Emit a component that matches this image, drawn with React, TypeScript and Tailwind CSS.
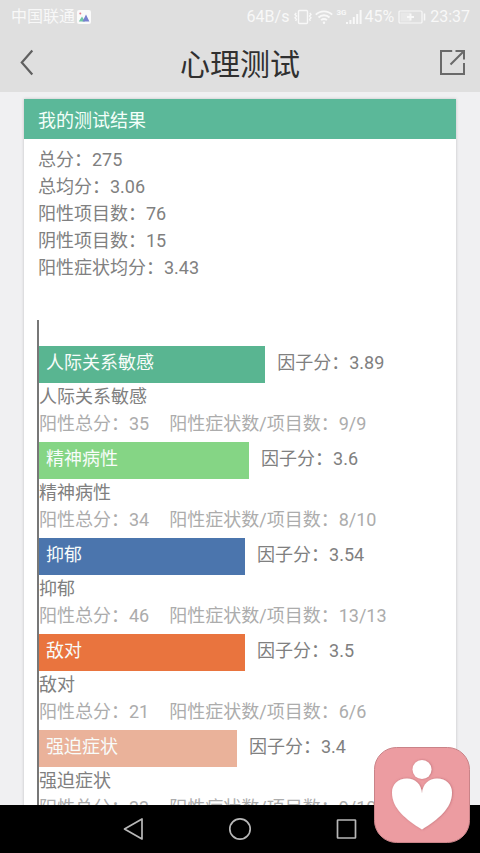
import React from 'react';

interface Factor {
  name: string;
  score: string;
  total: number;
  items: string;
  width: number;
  color: string;
}

const summary = [
  { label: '总分', value: '275' },
  { label: '总均分', value: '3.06' },
  { label: '阳性项目数', value: '76' },
  { label: '阴性项目数', value: '15' },
  { label: '阳性症状均分', value: '3.43' },
];

const factors: Factor[] = [
  { name: '人际关系敏感', score: '3.89', total: 35, items: '9/9', width: 56, color: 'bg-[#59b591]' },
  { name: '精神病性', score: '3.6', total: 34, items: '8/10', width: 52, color: 'bg-[#85d585]' },
  { name: '抑郁', score: '3.54', total: 46, items: '13/13', width: 51, color: 'bg-[#4b75ad]' },
  { name: '敌对', score: '3.5', total: 21, items: '6/6', width: 51, color: 'bg-[#e9743e]' },
  { name: '强迫症状', score: '3.4', total: 33, items: '9/10', width: 49, color: 'bg-[#eab29a]' },
];

const StatusBar: React.FC = () => (
  <div className="flex h-[33px] items-center justify-between pr-[10px] pl-[11px] text-base leading-[33px] text-[#f8f8f8]">
    <div className="flex items-center gap-[2px]">
      <span>中国联通</span>
      <svg width="14" height="14" viewBox="0 0 14 14">
        <rect width="14" height="14" rx="2" fill="#fafafa" />
        <circle cx="3.3" cy="3.5" r="1" fill="#e77b8b" />
        <path d="M1.8 11.5 5 6.5l3 5z" fill="#70c7a4" />
        <path d="M5.5 11.5 9 4.5l3.4 7z" fill="#7780cf" />
      </svg>
    </div>
    <div className="flex items-center gap-1">
      <span>64B/s</span>
      <div className="flex items-center gap-[2px]">
        {/* vibrate */}
        <svg width="20" height="16" viewBox="0 0 20 16" fill="none" stroke="currentColor" strokeWidth="1.4">
          <rect x="5.5" y="1.5" width="9" height="13" rx="1" />
          <path d="M3.2 4 2 5.5l1.5 1.6L2 8.8l1.5 1.6L2.6 12M16.8 4 18 5.5l-1.5 1.6L18 8.8l-1.5 1.6.9 1.6" />
        </svg>
        {/* wifi */}
        <svg width="18" height="16" viewBox="0 0 18 16" fill="none" stroke="currentColor" strokeWidth="1.8">
          <path d="M.8 5.7a11.6 11.6 0 0 1 16.4 0M3.5 8.5a7.8 7.8 0 0 1 11 0M6.1 11.2a4.1 4.1 0 0 1 5.8 0" />
          <circle cx="9" cy="13.8" r="1.2" fill="currentColor" stroke="none" />
        </svg>
        {/* signal */}
        <div className="flex items-start pl-px">
          <span className="text-[8px] leading-2 font-bold">3G</span>
          <svg width="16" height="16" viewBox="0 0 16 16" fill="currentColor">
            <path d="M0 13h2v2H0zM3.4 11h2v4h-2zM6.8 8h2v7h-2zM10.2 5h2v10h-2zM13.6 1h2v14h-2z" />
          </svg>
        </div>
        <span>45%</span>
      </div>
      <svg width="28" height="14" viewBox="0 0 28 14">
        <rect x="1" y="1" width="23" height="12" rx="1" fill="none" stroke="currentColor" strokeWidth="1.2" />
        <rect x="2.5" y="2.5" width="10" height="9" fill="#e8e8e8" />
        <path d="M12.5 3.5v7M9 7h7" stroke="currentColor" strokeWidth="2" />
        <path d="M26.5 3.5v7" stroke="currentColor" strokeWidth="1.6" />
      </svg>
      <span>23:37</span>
    </div>
  </div>
);

const TitleBar: React.FC = () => (
  <div className="flex h-[59px] items-center justify-between px-[14px]">
    <button aria-label="返回" className="text-[#606060]">
      <svg width="26" height="28" viewBox="0 0 26 28" fill="none" stroke="currentColor" strokeWidth="2.2">
        <path d="M18.3 1.5 7.8 13.5l10.500 12" />
      </svg>
    </button>
    <h1 className="pt-1 text-3xl text-[#303030]">心理测试</h1>
    <button aria-label="分享" className="text-[#6a6a6a]">
      <svg width="26" height="28" viewBox="0 0 26 28" fill="none" stroke="currentColor" strokeWidth="2">
        <path d="M12.2 2H1v23h23V14M10.5 15.5 23.5 2.5M15.5 2H24v8.500" />
      </svg>
    </button>
  </div>
);

const FactorRow: React.FC<{ factor: Factor }> = ({ factor }) => (
  <li className="mb-[5px]">
    <div className="flex gap-3">
      <div
        className={`h-[37px] pt-[3px] pl-[7px] text-[#f8fcfa] ${factor.color}`}
        style={{ width: `${factor.width}%` }}
      >
        {factor.name}
      </div>
      <div className="pt-[3px]">因子分：{factor.score}</div>
    </div>
    <h3>{factor.name}</h3>
    <p className="flex gap-5 whitespace-nowrap text-[#acacac]">
      <span>阳性总分：{factor.total}</span>
      <span>阳性症状数/项目数：{factor.items}</span>
    </p>
  </li>
);

const NavBar: React.FC = () => (
  <nav className="flex h-12 shrink-0 items-center justify-center gap-[82px] bg-black text-[#b8b8b8]">
    <button aria-label="后退">
      <svg width="24" height="24" viewBox="0 0 24 24" fill="none" stroke="currentColor" strokeWidth="1.7" strokeLinejoin="round">
        <path d="M20 2v20L2.5 12z" />
      </svg>
    </button>
    <button aria-label="主页">
      <svg width="24" height="24" viewBox="0 0 24 24" fill="none" stroke="currentColor" strokeWidth="1.7">
        <circle cx="12" cy="12" r="10.2" />
      </svg>
    </button>
    <button aria-label="最近任务">
      <svg width="24" height="24" viewBox="0 0 24 24" fill="none" stroke="currentColor" strokeWidth="1.7">
        <rect x="3.5" y="3" width="18" height="18" rx="0.5" />
      </svg>
    </button>
  </nav>
);

const App: React.FC = () => {
  return (
    <div className="relative flex h-screen flex-col overflow-hidden bg-[#f0f0f2] font-['Roboto','Noto_Sans_CJK_SC',sans-serif]">
      <header className="shrink-0 bg-[#dfdfdf]">
        <StatusBar />
        <TitleBar />
      </header>

      <main className="min-h-0 flex-1 overflow-hidden px-6 pt-[7px]">
        <section className="bg-white text-lg leading-[27px] text-[#808080] shadow-[0_0_3px_rgba(0,0,0,0.2)]">
          <h2 className="h-10 bg-[#5bb899] px-[14px] pt-2 text-[#f4fffa]">我的测试结果</h2>
          <dl className="px-[14px] pt-[7px]">
            {summary.map((item) => (
              <div key={item.label} className="flex">
                <dt>{item.label}：</dt>
                <dd>{item.value}</dd>
              </div>
            ))}
          </dl>

          {/* Factor chart */}
          <ul className="mx-[13px] mt-[39px] border-l-2 border-[#777777] pt-[26px]">
            {factors.map((factor) => (
              <FactorRow key={factor.name} factor={factor} />
            ))}
          </ul>
        </section>
      </main>

      <NavBar />

      {/* Floating app badge */}
      <button aria-label="心理助手" className="absolute right-[10px] bottom-[10px]">
        <svg width="96" height="96" viewBox="0 0 96 96">
          <defs>
            <filter id="soft" x="-20%" y="-20%" width="140%" height="140%">
              <feDropShadow dx="0.5" dy="0" stdDeviation="1" floodColor="#8a3d47" floodOpacity="0.5" />
            </filter>
          </defs>
          <rect x="0.5" y="0.5" width="95" height="95" rx="22" fill="#ec9ca1" stroke="#c98388" strokeWidth="1" />
          <g fill="#ffffff" filter="url(#soft)">
            <circle cx="48" cy="22.5" r="9.5" />
            <path d="M48 46.5C47.5 37 41 31.500 33 31.500 24 31.500 18 37.500 18 45.500c0 16 14 27 30 37 16-10 30-21 30-37 0-8-6-14-15-14C55 31.500 48.500 37 48 46.500z" />
          </g>
        </svg>
      </button>
    </div>
  );
};

export default App;
